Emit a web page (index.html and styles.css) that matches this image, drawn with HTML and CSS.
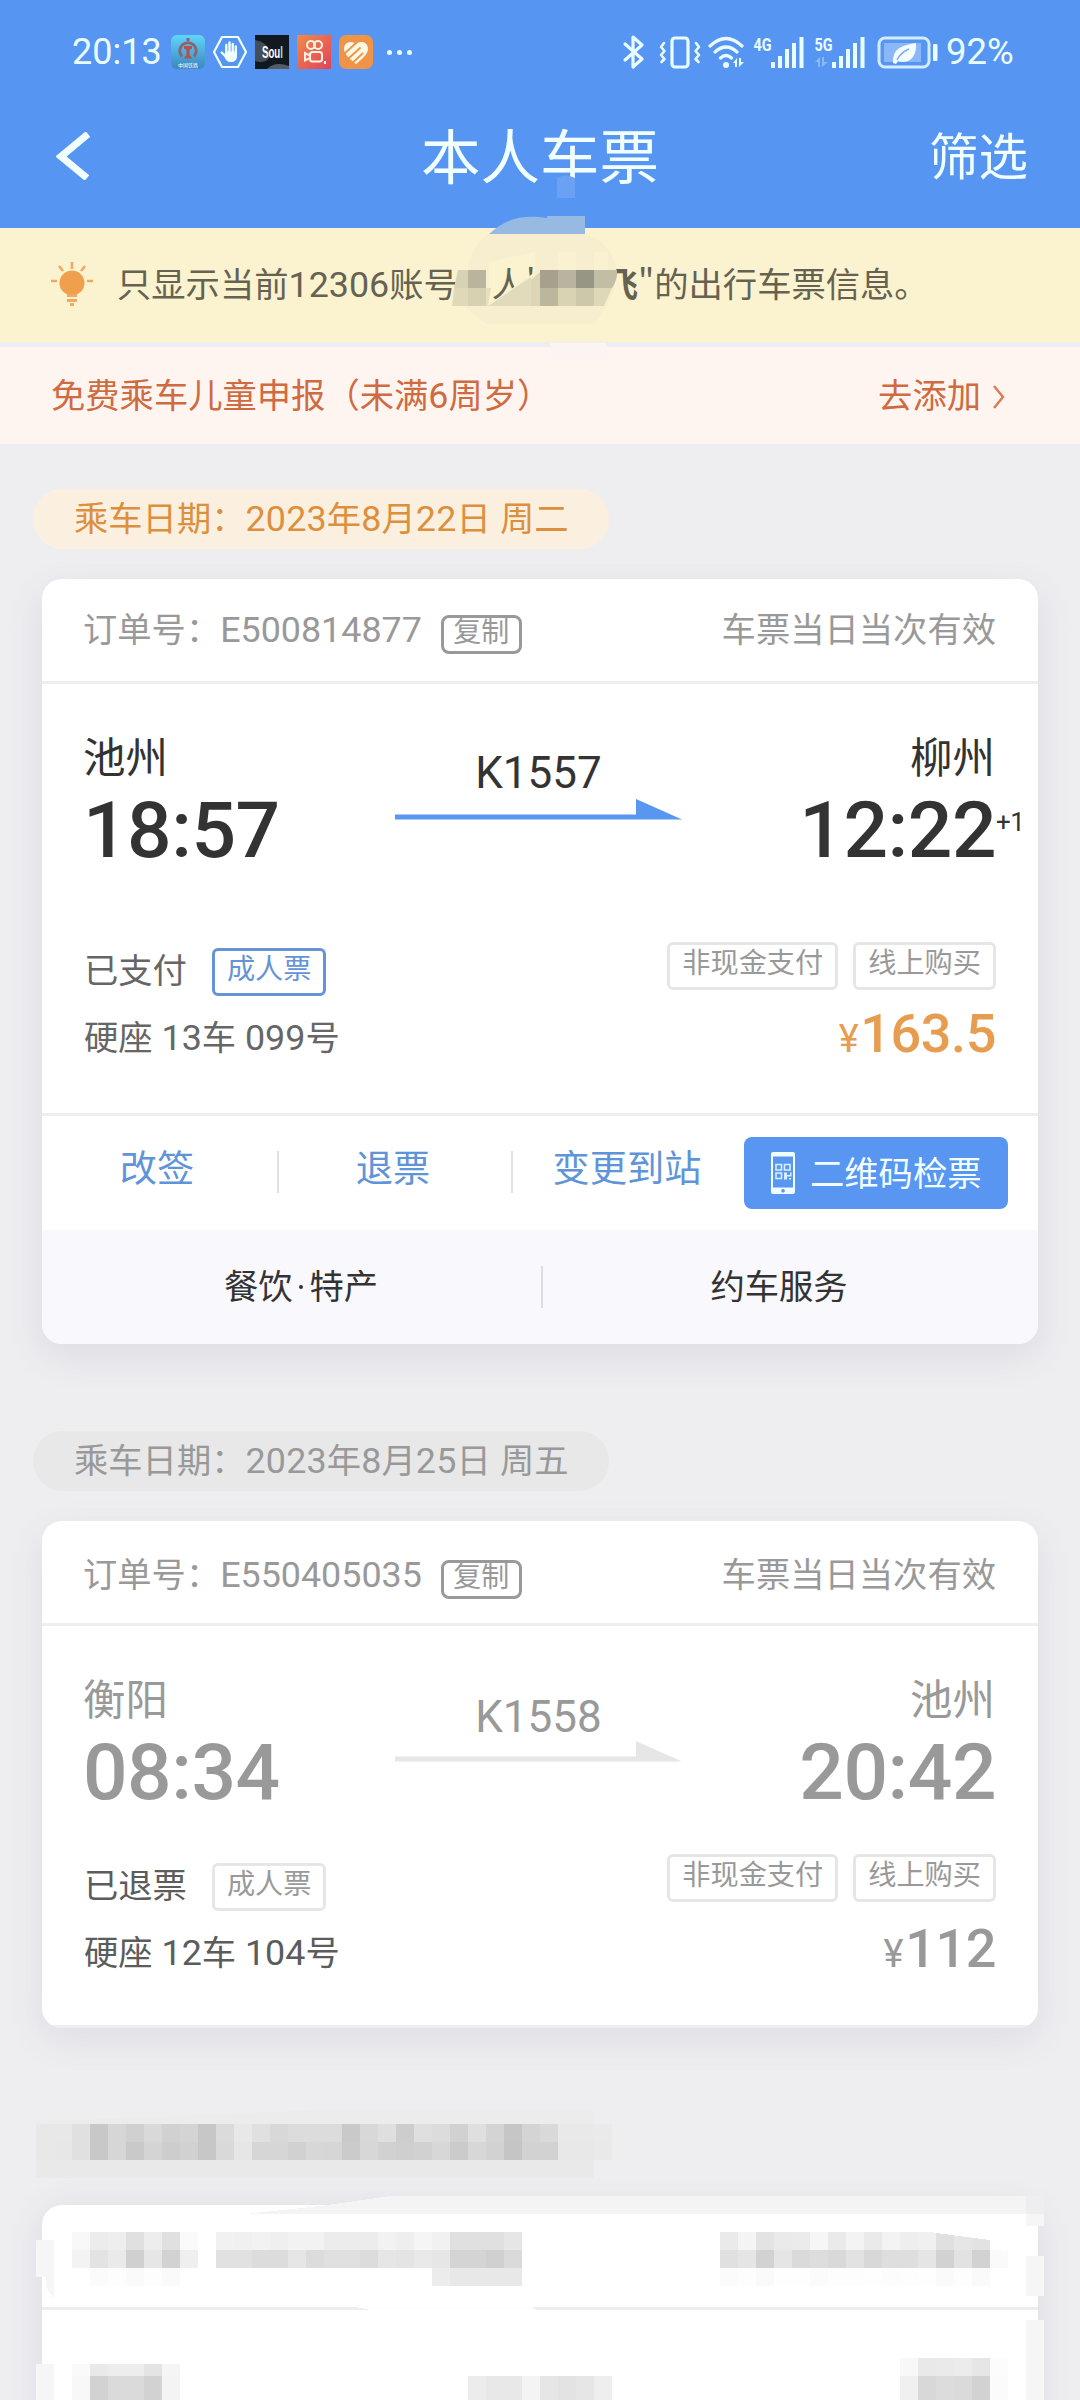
FILE: index.html
```html
<!DOCTYPE html>
<html lang="zh-CN">
<head>
<meta charset="utf-8">
<title>本人车票</title>
<link rel="stylesheet" href="styles.css">
</head>
<body>
<div class="screen">
  <header class="header">
    <div class="status">
      <span class="clock">20:13</span>
      <div class="apps">
        <svg class="app" viewBox="0 0 34 34"><defs><linearGradient id="rail" x1="0" y1="0" x2="0" y2="1"><stop offset="0" stop-color="#5fd6f8"/><stop offset="1" stop-color="#3b86c0"/></linearGradient></defs><rect width="34" height="34" rx="6" fill="url(#rail)"/><path d="M11 21.500a8.200 8.200 0 1 1 12 0" fill="none" stroke="#8d6472" stroke-width="3"/><path d="M13 11h8v2.500l-2.500 1.500v5l3 3.500h-9l3-3.500v-5l-2.500-1.500z" fill="#b5504f"/><path d="M17 3v3" stroke="#8d6472" stroke-width="3"/><text x="17" y="31.500" font-size="5" text-anchor="middle" fill="#fff">中国铁路</text></svg>
        <svg class="app" viewBox="0 0 34 34"><path d="M9 2h16l8 15-8 15H9L1 17z" fill="none" stroke="#f0ffff" stroke-width="2.200" stroke-linejoin="round"/><g stroke="#f0ffff" stroke-width="2.400" stroke-linecap="round"><path d="M13.300 18V10M16.500 17V7.500M19.700 17V9M22.800 18v-6.500M8.700 17.500l4.500 4.500"/></g><path d="M12 16.500h12v4.500c0 3.500-1.800 6-6 6-3.800 0-5-1.500-6.500-5z" fill="#f0ffff"/></svg>
        <svg class="app" viewBox="0 0 34 34"><rect width="34" height="34" fill="#111820"/><path d="M0 5q12 2 15 12c1 8-6 12-15 9z" fill="#454d56"/><path d="M12 34q8-8 22-3v3z" fill="#555c63"/><text class="soul" x="17.500" y="23" text-anchor="middle" fill="#fff" textLength="21" lengthAdjust="spacingAndGlyphs">Sou<tspan fill="#9ae8dc">l</tspan></text></svg>
        <svg class="app" viewBox="0 0 34 34"><defs><linearGradient id="ks" x1="0" y1="0" x2="1" y2="1"><stop offset="0" stop-color="#f28a45"/><stop offset="1" stop-color="#e0435c"/></linearGradient></defs><rect width="34" height="34" fill="url(#ks)"/><g fill="none" stroke="#fff3e6" stroke-width="2"><circle cx="14" cy="10" r="4"/><circle cx="21" cy="10" r="4"/><rect x="13" y="17" width="12" height="9.500" rx="2.500"/><path d="M13 20.500l-5-2.500v7.500l5-2.500z"/><path d="M28 26v3"/></g></svg>
        <svg class="app" viewBox="0 0 34 34"><rect width="34" height="34" rx="7" fill="#ef9347"/><path d="M17 9.500C13 5 5 7 5 14c0 5 6 10 12 15 6-5 12-10 12-15C29 7 21 5 17 9.500z" fill="#fff8e4"/><path d="M4.500 19.500L17 8M9 24L21.500 12.500M14 27.500L24 18" stroke="#ef9347" stroke-width="1.800"/></svg>
      </div>
      <i class="dots"></i>
      <svg class="signals" viewBox="0 0 320 40" width="320" height="40">
        <g fill="none" stroke="#e9fdff" stroke-width="3.200" stroke-linejoin="round" stroke-linecap="round">
          <path d="M4 12l17 15-9 8V5L21 13 4 28"/>
          <rect x="51" y="6" width="16" height="29" rx="3"/>
          <path d="M43 11l-3 4 3.500 4-3.500 4 3.500 4-3 3M75 11l3 4-3.500 4 3.500 4-3.500 4 3 3" stroke-width="2.600"/>
          <path d="M89 14q16-15 32 0M94 20q11-10 22 0M99.500 26q5.500-5 11 0"/>
        </g>
        <g fill="#e9fdff">
          <circle cx="105" cy="33" r="3"/>
          <path d="M112 31l4-5v9h-2v-4zM118 26h2v4h3l-5 5z"/>
          <rect x="150" y="30" width="4" height="6"/><rect x="157" y="24" width="4" height="12"/><rect x="164" y="17" width="4" height="19"/><rect x="171" y="11" width="4" height="25"/><rect x="178.500" y="5" width="4" height="31"/>
          <rect x="211" y="30" width="4" height="6"/><rect x="218" y="24" width="4" height="12"/><rect x="225" y="17" width="4" height="19"/><rect x="232" y="11" width="4" height="25"/><rect x="239.500" y="5" width="4" height="31"/>
          <text class="net" x="132.500" y="19" textLength="18" lengthAdjust="spacingAndGlyphs">4G</text>
          <text class="net" x="193.500" y="19" textLength="18" lengthAdjust="spacingAndGlyphs">5G</text>
          <path opacity=".35" d="M194 30l5-5v10h-2v-5zM201 25h2v5h4l-6 5z"/>
          <rect x="312" y="12" width="4.500" height="17" rx="1"/>
        </g>
        <rect x="258" y="6" width="50" height="29" rx="6" fill="none" stroke="#d4ecff" stroke-width="3"/>
        <rect x="263" y="11" width="37" height="19" fill="#8ab6fa"/>
        <path d="M272 31c0-12 4-17 23-20 1 13-6 22-18 18l-2 3z" fill="#f4fdff"/><path d="M276 28q3-7 12-11" fill="none" stroke="#7daef9" stroke-width="1.500"/>
      </svg>
      <span class="battery">92%</span>
    </div>
    <div class="nav">
      <svg class="back" viewBox="0 0 34 48"><path d="M32 2L5 24.500 31 46" fill="none" stroke="#f2ffff" stroke-width="7"/></svg>
      <h1 class="title">本人车票</h1>
      <span class="filter">筛选</span>
    </div>
  </header>

  <div class="notice">
    <svg class="bulb" viewBox="0 0 44 48"><g stroke="#eeaa62" stroke-width="2.600"><path d="M22 1v7M9 5l4 5M35 5l-4 5M1 20h6M37 20h6"/></g><circle cx="22" cy="22" r="12.500" fill="#f0a04c"/><path d="M17 33h10v3H17zM17 38h10v3H17zM20 42h4v3h-4z" fill="#eeaa62"/></svg>
    <p class="notice-text">只显示当前<span class="n">12306</span>账号<i class="gap-a"></i>人'<i class="gap-b"></i><b>飞</b>"的出行车票信息。</p>
    <svg class="censor" viewBox="440 170 220 220" width="220" height="220">
      <path d="M557 178q9-5 18 0v20h-18z" fill="#6aa1f4"/>
      <path d="M489 234C505 219 522 214 547 218V216H585V234z" fill="#96bae2"/>
      <path fill-rule="evenodd" d="M488 234H585C605 240 616 255 617 276Q614 300 594 324H486Q466 308 455 300L468 270Q470 248 488 234zM489 262L535 252V272L489 305z" fill="#f6eecf"/>
      <path d="M558 252h18v18h-18zM594 252h14v18h-14z" fill="#f9f1cf"/>
      <path d="M458 270h10v18H454z" fill="#d8d2b5"/><path d="M468 270h18v18h-18z" fill="#b9b49d"/><path d="M454 288h14v18h-16z" fill="#e0d9b9"/><path d="M468 288h18v18h-18z" fill="#d8d1b1"/><path d="M486 288h5l-3 18h-2z" fill="#e7dfbd"/>
      <path d="M488 306L531 277V306z" fill="#e2dbbb"/>
      <path d="M531 280l9-8v34h-9z" fill="#ddd6b6"/>
      <path d="M540 270h18v18h-18z" fill="#a5a18d"/><path d="M558 270h18v18h-18z" fill="#b8b49f"/><path d="M576 270h18v18h-18z" fill="#979685"/><path d="M594 270h23q1 9-5 18h-18z" fill="#c2bea5"/>
      <path d="M540 288h18v18h-18z" fill="#bbb79c"/><path d="M558 288h18v18h-18z" fill="#d9d3b4"/><path d="M576 288h18v18h-18z" fill="#cdc8aa"/><path d="M594 288h18l-8 18h-10z" fill="#ded8b7"/>
      <path d="M550 343h56v17h-56z" fill="#fbf4f2"/>
    </svg>
  </div>

  <div class="child">
    <span>免费乘车儿童申报（未满<span class="n">6</span>周岁）</span>
    <span class="child-add">去添加<svg viewBox="0 0 14 24"><path d="M2 1l9 11-9 11" fill="none" stroke="#dc7d52" stroke-width="2.500"/></svg></span>
  </div>

  <div class="date">乘车日期：<span class="n">2023</span>年<span class="n">8</span>月<span class="n">22</span>日<span class="n"> </span>周二</div>
  <section class="card">
    <div class="order">
      <span>订单号：<span class="n">E500814877</span></span><span class="copy">复制</span><span class="valid">车票当日当次有效</span>
    </div>
    <div class="trip">
      <div class="stop"><span class="station">池州</span><span class="time">18:57</span></div>
      <div class="train"><span class="no">K1557</span><svg class="arrow" viewBox="0 0 287 21"><path d="M0 15.500H241V0L287 20.500H0z"/></svg></div>
      <div class="stop end"><span class="station">柳州</span><span class="time">12:22<sup class="plus">+1</sup></span></div>
    </div>
    <div class="info">
      <div class="left">
        <div class="state">已支付<span class="tag kind">成人票</span></div>
        <div class="seat">硬座<span class="n"> 13</span>车<span class="n"> 099</span>号</div>
      </div>
      <div class="right">
        <div class="tags"><span class="tag">非现金支付</span><span class="tag">线上购买</span></div>
        <div class="price"><span class="yen">¥</span>163.5</div>
      </div>
    </div>
    <div class="actions">
      <span class="act">改签</span><span class="act">退票</span><span class="act">变更到站</span>
      <span class="qr"><svg viewBox="0 0 24 42"><path fill-rule="evenodd" d="M2 0H22Q24 0 24 2V40Q24 42 22 42H2Q0 42 0 40V2Q0 0 2 0zM2 4.500V35.500H22V4.500zM12 37a1.800 1.800 0 1 0 .1 0z" fill="#effdff"/><g fill="none" stroke="#d8f0ff" stroke-width="1.600"><path d="M5 12.500h5.500v5.500H5zM13.500 12.500H19v5.500h-5.500zM5 21h5.500v5.500H5z"/></g><path d="M13 20.500h3v2.500h3v-2.500h1.500v4H16v3h-3zM18 26h2v1.500h-2z" fill="#d8f0ff"/></svg>二维码检票</span>
    </div>
    <div class="services"><span>餐饮<i class="mid-dot"></i>特产</span><span>约车服务</span></div>
  </section>

  <div class="date past">乘车日期：<span class="n">2023</span>年<span class="n">8</span>月<span class="n">25</span>日<span class="n"> </span>周五</div>
  <section class="card past">
    <div class="order">
      <span>订单号：<span class="n">E550405035</span></span><span class="copy">复制</span><span class="valid">车票当日当次有效</span>
    </div>
    <div class="trip">
      <div class="stop"><span class="station">衡阳</span><span class="time">08:34</span></div>
      <div class="train"><span class="no">K1558</span><svg class="arrow" viewBox="0 0 287 21"><path d="M0 15.500H241V0L287 20.500H0z"/></svg></div>
      <div class="stop end"><span class="station">池州</span><span class="time">20:42</span></div>
    </div>
    <div class="info">
      <div class="left">
        <div class="state">已退票<span class="tag kind">成人票</span></div>
        <div class="seat">硬座<span class="n"> 12</span>车<span class="n"> 104</span>号</div>
      </div>
      <div class="right">
        <div class="tags"><span class="tag">非现金支付</span><span class="tag">线上购买</span></div>
        <div class="price"><span class="yen">¥</span>112</div>
      </div>
    </div>
  </section>

  <div class="masked">
    <div class="masked-card"><div class="masked-head"></div></div>
    <svg class="mosaic" viewBox="0 2100 1080 300" width="1080" height="300" shape-rendering="crispEdges">
      <path d="M36 2122L320 2110H594V2178H36z" fill="#ececec"/>
      <path d="M36 2160H594V2178H36z" fill="#e9e9ea"/>
      <path d="M245 2214L320 2206 390 2196H1026V2214z" fill="#f4f4f4"/>
      <path d="M1026 2196h18v18h-18z" fill="#eeeef1"/>
      <path d="M1026 2214h18v12h-18zM1026 2256h18v40h-18zM1026 2320h18v80h-18zM36 2240h18v59l-8-12v-10H36zM36 2364h18v36H36z" fill="#f6f6f6"/>
      <path d="M350 2306l25 5h165l-12-5z" fill="#fefefe"/>
    </svg>
  </div>
</div>
<script src="mosaic.js"></script>
</body>
</html>
```
FILE: styles.css
```css
* { box-sizing: border-box; }
body { margin: 0; background: #eeeef1; }
.screen {
  width: 1080px; height: 2400px; overflow: hidden; position: relative;
  font-family: "Noto Sans CJK SC", sans-serif;
  font-size: 34.3px; line-height: 50px; color: #666;
}
.n { font-family: Roboto, sans-serif; font-size: 1.045em; line-height: 1; white-space: pre; }
i { font-style: normal; }

.header { height: 228px; background: #5696f2; color: #f2ffff; padding-top: 26px; }
.status { height: 52px; padding-left: 72px; display: flex; align-items: center; font-family: Roboto, sans-serif; }
.clock { font-size: 36px; width: 99px; color: #e9fdff; }
.battery { font-size: 36.500px; margin-left: 5px; color: #e9fdff; }
.apps { display: flex; gap: 8px; }
.app { width: 34px; height: 34px; display: block; }
.soul { font: 700 16px "Liberation Sans", sans-serif; }
.net { font: 700 19px Roboto, sans-serif; }
.dots { width: 5px; height: 5px; border-radius: 50%; background: #e9fdff; margin-left: 14px; box-shadow: 10px 0 #e9fdff, 20px 0 #e9fdff; }
.signals { margin-left: 229px; display: block; flex: none; }
.nav { display: grid; grid-template-columns: 200px 1fr 200px; align-items: center; height: 100px; margin-top: 26px; padding: 4px 52px 0 56px; line-height: 88px; }
.back { width: 34px; height: 48px; }
.title { margin: -7px 0 0; font-size: 59.500px; font-weight: 400; text-align: center; padding-right: 4px; }
.filter { font-size: 49.500px; text-align: right; margin-top: -4px; }

.notice { height: 114px; background: #fbf3cf; display: flex; align-items: center; padding-left: 50px; position: relative; color: #656252; }
.bulb { width: 44px; height: 48px; margin-right: 23px; }
.notice-text { margin: -7px 0 0; white-space: nowrap; }
.notice-text b { font-weight: 700; }
.gap-a { display: inline-block; width: 34px; }
.gap-b { display: inline-block; width: 68px; }
.censor { position: absolute; left: 440px; top: -58px; z-index: 1; }
.child { margin-top: 5px; height: 97px; background: #fef5f1; color: #cf6b41; padding: 0 74px 6px 51px; display: flex; align-items: center; justify-content: space-between; }
.child-add svg { width: 14px; height: 24px; margin-left: 11px; vertical-align: -1px; }

.date { margin: 45px 0 0 33px; width: 576px; height: 60px; border-radius: 30px; background: #fbf0e0; color: #dc8f3d; padding-left: 41px; line-height: 55px; white-space: nowrap; }
.date .n { letter-spacing: .2px; }
.date.past { margin-top: 87px; background: #e8e8e8; color: #999; }

.card { margin: 30px 42px 0; background: #fff; border-radius: 20px; box-shadow: 0 12px 36px rgba(90, 90, 120, .12); overflow: hidden; }
.order { height: 105px; border-bottom: 3px solid #eee; padding: 23px 42px 0 41px; display: flex; color: #999; }
.past .order { padding-top: 26px; }
.copy { width: 81px; height: 39px; margin: 13px 0 0 19px; border: 3px solid #999; border-radius: 8px; font-size: 28px; line-height: 25px; text-align: center; }
.valid { margin-left: auto; }
.trip { display: flex; justify-content: space-between; height: 199px; padding: 44px 42px 0 41px; color: #333; }
.stop { display: flex; flex-direction: column; width: 205px; }
.stop.end { align-items: flex-end; }
.station { font-size: 42.500px; line-height: 54px; }
.stop.end .station { margin-right: 1px; }
.time { font: 500 78.500px/92px Roboto, sans-serif; letter-spacing: -.5px; position: relative; margin-top: 2px; }
.plus { position: absolute; left: 100%; top: 21px; font: 400 26px/34px Roboto, sans-serif; }
.train { display: flex; flex-direction: column; align-items: center; margin-right: 2px; }
.no { font: 400 44px/54px Roboto, sans-serif; margin-top: 18px; }
.arrow { width: 287px; height: 21px; fill: #5896f2; margin-top: -1px; }
.info { display: flex; justify-content: space-between; height: 233px; border-bottom: 3px solid #eee; padding: 59px 42px 0 42px; }
.state { display: flex; line-height: 50px; height: 54px; margin-top: 1px; }
.tag { height: 48px; border: 3px solid #e6e6e6; border-radius: 6px; font-size: 28.200px; line-height: 31px; padding: 0 12px; color: #999; }
.kind { margin: 5px 0 0 25px; border-color: #6594d6; color: #6594d6; }
.seat { line-height: 50px; margin-top: 13px; }
.tags { display: flex; gap: 15px; justify-content: flex-end; }
.right .tag { text-align: center; }
.price { font: 500 54px/64px Roboto, sans-serif; letter-spacing: -.4px; color: #e69d50; text-align: right; margin-top: 12px; }
.yen { font-size: 38px; font-weight: 400; margin-right: 2px; }
.actions { height: 114px; display: flex; align-items: center; color: #6094d8; font-size: 37.200px; }
.act { width: 234px; text-align: center; position: relative; margin-top: -14px; }
.act:first-child { padding-right: 4px; }
.act + .act::before { content: ""; position: absolute; left: 1px; top: 10px; width: 2px; height: 42px; background: #e0e0e4; }
.qr { width: 264px; height: 72px; border-radius: 8px; background: #5896f2; color: #f2ffff; font-size: 34.300px; display: flex; align-items: center; padding: 0 0 4px 27px; line-height: 64px; }
.qr svg { width: 24px; height: 42px; margin: 4px 15px 0 0; }
.services { height: 114px; background: #f8f8fd; color: #333; display: grid; grid-template-columns: 1fr 1fr; align-items: center; text-align: center; background-image: linear-gradient(#dcdce2, #dcdce2); background-size: 2px 42px; background-position: 499px 36px; background-repeat: no-repeat; }
.services span { padding: 0 20px 7px 0; }
.services span:first-child { padding: 0 0 7px 20px; }
.mid-dot { display: inline-block; width: 4px; height: 4px; margin: 0 6.500px; border-radius: 50%; background: #333; vertical-align: 10px; }

.card.past { box-shadow: 0 12px 36px rgba(90, 90, 120, .1); }
.past .trip { color: #999; }
.past .no { margin-top: 20px; }
.past .arrow { fill: #e6e6e6; margin-top: -3px; }
.past .info { height: 203px; padding-top: 29px; color: #5c5c5c; }
.past .state { margin-top: 4px; }
.past .price { color: #999; margin-top: 15px; }
.past .kind { border-color: #e6e6e6; color: #999; }

.masked { height: 300px; position: absolute; left: 0; top: 2100px; width: 1080px; }
.masked-card { margin: 105px 42px 0; height: 260px; border-radius: 20px; background: #fff; box-shadow: 0 6px 36px rgba(90, 90, 120, .12); }
.masked-head { height: 105px; border-bottom: 3px solid #eee; }
.mosaic { position: absolute; left: 0; top: 0; }
```
FILE: mosaic.js
```js
// Rows of grey blocks that hide the text of the third ticket: [x, y, height, levels]
const rows = [
  [36, 2124, 18, "e8 e8 e0 c8 d6 d0 d9 d1 d4 c7 db e8 e0 d8 dc dc dc c9 d8 df cd df dc d1 df d4 c6 d4 d9 e9 e9 ea"],
  [36, 2142, 18, "e8 e7 e0 c8 d6 c9 d4 cd d1 c7 d9 e6 d6 d6 d1 d7 d6 cb d7 d1 cf d1 d7 cb d7 d2 c5 d2 d2 e8 e8 e9"],
  [72, 2232, 18, "f8 ec ee e0 ed e0 fa ff f1 f0 f2 ef f2 f2 ec ec ec f2 ee f5 f1 e0 e0 e0 e6"],
  [72, 2250, 18, "f3 e3 ea d0 e6 d2 ef ff e1 e1 dc dc e6 dc e0 e0 dc e6 e4 e9 e6 d4 d4 d0 da"],
  [90, 2268, 18, "fb fd fa fd fa"],
  [432, 2268, 18, "ec e8 e8 e8 e8"],
  [720, 2232, 18, "ea f4 e3 ea eb f6 ea f3 ea f3 ee f0 e0 e6 e2"],
  [720, 2250, 18, "e0 e5 d2 e5 da dd d9 e2 d8 de de e5 d2 e2 d2 fa"],
  [720, 2268, 18, "fb fd fa fe fe fb fd fd fe fc fd fe fa fd fa"],
  [72, 2364, 12, "fa e9 ed ed e4 f5"],
  [72, 2376, 24, "f8 d2 da da d2 f4"],
  [468, 2376, 24, "ec e8 e8 f4 e6 e3 e6 ee"],
  [900, 2358, 18, "f8 e9 ea ec e6 fc"],
  [900, 2376, 24, "f0 d8 dc da d2 fb"]
];
const svg = document.querySelector(".mosaic");
for (const [x, y, h, levels] of rows) {
  levels.split(" ").forEach((v, i) => {
    const r = document.createElementNS("http://www.w3.org/2000/svg", "rect");
    r.setAttribute("x", x + i * 18);
    r.setAttribute("y", y);
    r.setAttribute("width", 18);
    r.setAttribute("height", h);
    r.setAttribute("fill", "#" + v + v + v);
    svg.appendChild(r);
  });
}
// Slanted white corner over the end of the first text row
const cut = document.createElementNS("http://www.w3.org/2000/svg", "path");
cut.setAttribute("d", "M925 2230L936 2233 990 2240 1004 2252V2230z");
cut.setAttribute("fill", "#fff");
svg.appendChild(cut);
```
